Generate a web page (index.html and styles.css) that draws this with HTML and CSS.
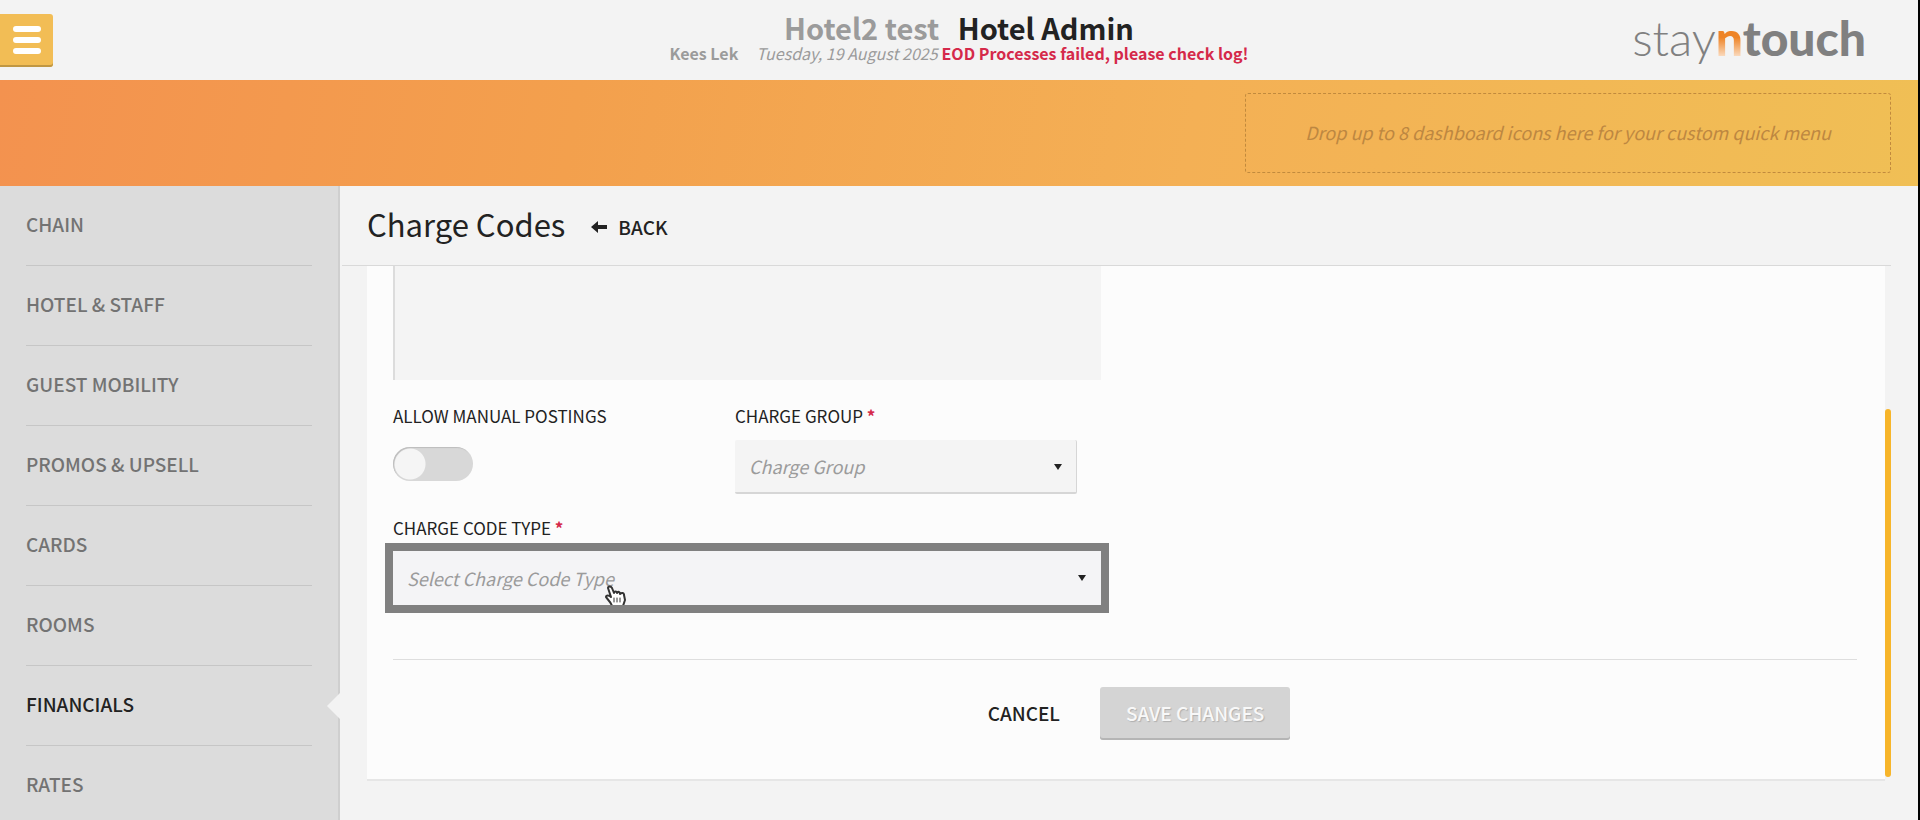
FILE: index.html
```html
<!DOCTYPE html>
<html lang="en">
<head>
  <meta charset="UTF-8" />
  <meta name="viewport" content="width=device-width, initial-scale=1.0" />
  <title>Hotel Admin - Charge Codes</title>
  <link rel="stylesheet" href="styles.css">
</head>
<body>
  <header class="top-bar">
    <div class="top-left">
      <button class="menu-button" type="button" aria-label="Menu">
        <svg width="28" height="28" viewBox="0 0 28 28" stroke="#fff" stroke-width="6" stroke-linecap="round">
          <path d="M3 3h22M3 14h22M3 25h22" />
        </svg>
      </button>
    </div>
    <div class="top-title">
      <h1><span class="hotel-name">Hotel2 test</span> Hotel Admin</h1>
      <p><strong class="user">Kees Lek</strong><em>Tuesday, 19 August 2025</em><strong class="error">EOD Processes failed, please check log!</strong></p>
    </div>
    <div class="logo"><span class="logo-stay">stay</span><span class="logo-n">n</span><span class="logo-touch">touch</span></div>
  </header>

  <div class="quick-menu">
    <div class="drop-area">Drop up to 8 dashboard icons here for your custom quick menu</div>
  </div>

  <div class="page">
    <nav class="sidebar">
      <ul>
        <li><a href="#">Chain</a></li>
        <li><a href="#">Hotel &amp; Staff</a></li>
        <li><a href="#">Guest Mobility</a></li>
        <li><a href="#">Promos &amp; Upsell</a></li>
        <li><a href="#">Cards</a></li>
        <li><a href="#">Rooms</a></li>
        <li class="active"><a href="#">Financials</a></li>
        <li><a href="#">Rates</a></li>
      </ul>
    </nav>

    <main class="content">
      <div class="content-header">
        <h2>Charge Codes</h2>
        <a class="back" href="#">
          <svg width="16" height="12" viewBox="0 0 16 12" fill="#222"><path d="M0 6L7 0V4H16V8H7V12Z" /></svg>
          Back
        </a>
      </div>

      <div class="scroll-area">
        <form class="panel">
          <div class="fields">
            <textarea aria-label="Description"></textarea>
            <div class="row">
              <div class="field">
                <label for="manual">Allow manual postings</label>
                <input class="switch" type="checkbox" id="manual">
              </div>
              <div class="field">
                <label for="group">Charge group <span class="required">*</span></label>
                <div class="select">
                  <select id="group"><option>Charge Group</option></select>
                </div>
              </div>
            </div>
            <div class="field code-type">
              <label for="type">Charge code type <span class="required">*</span></label>
              <div class="select highlighted">
                <select id="type"><option>Select Charge Code Type</option></select>
                <svg class="cursor" width="22" height="20" viewBox="0 0 22 20" fill="#fff" stroke="#333" stroke-width="2" stroke-linejoin="round" stroke-linecap="round">
                  <path d="M7 21C6 17 2 14 1 12C1 10 4 10 6 12L3 3C3 1 6 1 7 3L9 8C9 6 12 6 12 8C13 6 15 7 15 9C17 7 19 8 19 10L20 15L18 21Z" />
                  <path d="M9 13v4M12 13v4M15 13v4" stroke-width="1" />
                </svg>
              </div>
            </div>
          </div>
          <div class="actions">
            <button class="cancel" type="button">Cancel</button>
            <button class="save" type="submit" disabled>Save changes</button>
          </div>
        </form>
        <div class="scrollbar"></div>
      </div>
    </main>
  </div>
</body>
</html>
```
FILE: styles.css
```css
* {
  box-sizing: border-box;
  margin: 0;
  padding: 0;
}

body {
  height: 100vh;
  display: flex;
  flex-direction: column;
  overflow: hidden;
  border-right: 2px solid #000;
  background: #f3f3f3;
  color: #222;
  font-family: "Noto Sans CJK SC", "Open Sans", sans-serif;
  font-size: 18px;
  line-height: 24px;
}

a {
  color: inherit;
  text-decoration: none;
}

button,
select,
textarea {
  font: inherit;
  border: none;
}

/* Header */
.top-bar {
  flex: none;
  height: 80px;
  display: grid;
  grid-template-columns: 1fr auto 1fr;
  align-items: center;
}

.menu-button {
  display: flex;
  align-items: center;
  justify-content: center;
  width: 53px;
  height: 53px;
  background: #f2bd55;
  border-radius: 0 3px 3px 0;
  box-shadow: inset 0 -2px 0 #c09743;
}

.top-title {
  padding-bottom: 6px;
  text-align: center;
}

.top-title h1 {
  font-size: 29px;
  line-height: 32px;
}

.hotel-name {
  color: #9b9b9b;
  margin-right: 12px;
}

.top-title p {
  display: flex;
  font-size: 16px;
  line-height: 20px;
  color: #9b9b9b;
}

.user {
  margin-right: 18px;
}

.error {
  margin-left: 4px;
  color: #d5294a;
}

.logo {
  justify-self: end;
  margin-right: 52px;
  padding-bottom: 4px;
  font-family: Lato, sans-serif;
  font-size: 48px;
  line-height: 48px;
  color: #808080;
}

.logo-stay {
  font-weight: 300;
}

.logo-n,
.logo-touch {
  font-weight: 900;
}

.logo-n {
  color: transparent;
  background: linear-gradient(#ee8427 50%, #fbe0c8 85%);
  background-clip: text;
  -webkit-background-clip: text;
}

/* Quick menu */
.quick-menu {
  flex: none;
  height: 106px;
  display: flex;
  justify-content: flex-end;
  padding: 13px 27px;
  background: linear-gradient(100deg, #f3924f, #f3a04d 30%, #f4b055 62%, #f0bf55);
}

.drop-area {
  display: flex;
  align-items: center;
  padding: 0 59px 2px;
  border: 1px dashed #c18a3d;
  border-radius: 3px;
  color: #bd8741;
  font-style: italic;
}

/* Sidebar */
.page {
  flex: 1;
  min-height: 0;
  display: flex;
}

.sidebar {
  width: 340px;
  flex: none;
  padding: 0 26px;
  background: #dcdcdc;
  border-right: 2px solid #cfcfcf;
}

.sidebar ul {
  list-style: none;
}

.sidebar li {
  position: relative;
  border-bottom: 1px solid #c6c6c6;
}

.sidebar a {
  display: block;
  padding: 26px 0 29px;
  color: #737373;
  font-size: 19px;
  font-weight: 500;
  text-transform: uppercase;
}

.sidebar .active a {
  color: #222;
}

.sidebar .active::after {
  content: "";
  position: absolute;
  top: 27px;
  right: -28px;
  width: 13px;
  height: 26px;
  background: #f3f3f3;
  clip-path: polygon(100% 0, 0 50%, 100% 100%);
}

/* Content */
.content {
  flex: 1;
  min-width: 0;
  padding-left: 2px;
}

.content-header {
  display: flex;
  align-items: center;
  height: 80px;
  padding-left: 25px;
  margin-right: 27px;
  border-bottom: 1px solid #d9d9d9;
}

.content-header h2 {
  padding-bottom: 4px;
  font-size: 31px;
  line-height: 40px;
  font-weight: 400;
}

.back {
  display: flex;
  align-items: center;
  gap: 11px;
  margin-left: 26px;
  padding-top: 2px;
  font-size: 19px;
  font-weight: 500;
  text-transform: uppercase;
}

.scroll-area {
  display: flex;
  padding: 0 27px 0 25px;
}

.panel {
  flex: 1;
  padding: 0 28px 39px 26px;
  background: #fcfcfc;
  border-bottom: 2px solid #e6e6e6;
}

.scrollbar {
  align-self: flex-end;
  width: 6px;
  height: 368px;
  margin-bottom: 4px;
  border-radius: 3px;
  background: #f7b52a;
}

.fields {
  width: 50%;
  padding-right: 24px;
}

textarea {
  display: block;
  width: 100%;
  height: 114px;
  resize: none;
  background: #f4f4f4;
  border-left: 2px solid #dcdcdc;
}

.row {
  display: grid;
  grid-template-columns: 1fr 1fr;
  margin-right: 24px;
}

.field {
  padding-top: 24px;
}

.code-type {
  padding-top: 22px;
}

label {
  display: block;
  margin-bottom: 12px;
  font-size: 17px;
  text-transform: uppercase;
}

.code-type label {
  margin-bottom: 11px;
}

.required {
  color: #d5294a;
  font-weight: 700;
}

.switch {
  appearance: none;
  display: block;
  width: 80px;
  height: 34px;
  margin-top: 19px;
  border-radius: 17px;
  background: radial-gradient(circle at 17px 17px, #f5f5f5 15px, #d8d8d8 16px);
  box-shadow: inset 1px 1px 1px #bdbdbd;
}

.select {
  position: relative;
}

.select select {
  appearance: none;
  display: block;
  width: 100%;
  height: 54px;
  padding: 0 14px;
  background: #f4f4f4;
  border-right: 1px solid #d6d6d6;
  border-bottom: 2px solid #d6d6d6;
  border-radius: 2px;
  color: #9b9b9b;
  font-style: italic;
}

.select::after {
  content: "";
  position: absolute;
  top: 24px;
  right: 15px;
  width: 8px;
  height: 6px;
  background: #222;
  clip-path: polygon(0 0, 100% 0, 50% 100%);
}

.highlighted select {
  border: none;
  border-radius: 0;
  background: #f4f4f6;
  outline: 8px solid #808080;
}

.cursor {
  position: absolute;
  left: 212px;
  top: 34px;
}

.actions {
  display: flex;
  justify-content: center;
  gap: 12px;
  margin-top: 54px;
  padding-top: 27px;
  border-top: 1px solid #dedede;
}

.actions button {
  height: 53px;
  padding-bottom: 2px;
  border-radius: 3px;
  font-size: 19px;
  font-weight: 500;
  text-transform: uppercase;
}

.actions .cancel {
  padding: 0 28px 2px;
  background: none;
  color: #222;
}

.actions .save {
  padding: 0 26px 2px;
  background: #d4d4d4;
  box-shadow: inset 0 -2px 0 #b5b5b5;
  color: #f8f8f8;
  text-shadow: 1px 1px 1px #b0b0b0;
}
```
